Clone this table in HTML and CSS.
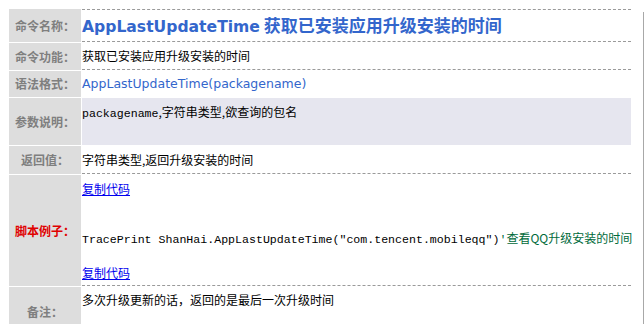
FILE: index.html
```html
<!DOCTYPE html>
<html>
<head>
<meta charset="utf-8">
<link rel="stylesheet" href="styles.css">
</head>
<body>
<table class="doc">
  <tr class="r-name">
    <th class="lbl">命令名称：</th>
    <td class="val title dash-top dash-bot"><span class="fn">AppLastUpdateTime</span> 获取已安装应用升级安装的时间</td>
  </tr>
  <tr class="r-func">
    <th class="lbl">命令功能：</th>
    <td class="val dash-bot">获取已安装应用升级安装的时间</td>
  </tr>
  <tr class="r-syntax">
    <th class="lbl">语法格式：</th>
    <td class="val syntax">AppLastUpdateTime(packagename)</td>
  </tr>
  <tr class="r-param">
    <th class="lbl">参数说明：</th>
    <td class="val param"><span class="mono">packagename</span>,字符串类型,欲查询的包名</td>
  </tr>
  <tr class="r-ret">
    <th class="lbl">返回值：</th>
    <td class="val dash-bot">字符串类型,返回升级安装的时间</td>
  </tr>
  <tr class="r-example">
    <th class="lbl red">脚本例子：</th>
    <td class="val example dash-bot">
      <div class="copy"><a href="#">复制代码</a></div>
      <div class="code"><span class="mono">TracePrint ShanHai.AppLastUpdateTime("com.tencent.mobileqq")</span><span class="comment"><span class="mono">'</span>查看QQ升级安装的时间</span></div>
      <div class="copy copy2"><a href="#">复制代码</a></div>
    </td>
  </tr>
  <tr class="r-note">
    <th class="lbl">备注：</th>
    <td class="val note">多次升级更新的话，返回的是最后一次升级时间</td>
  </tr>
</table>
<div class="edge"></div>
</body>
</html>
```

FILE: styles.css
```css
html, body {
  margin: 0;
  padding: 0;
  background: #ffffff;
  overflow: hidden;
}
body {
  padding: 8px 0 0 8px;
  font-family: "Noto Sans CJK SC", "Liberation Sans", sans-serif;
  font-size: 12px;
  color: #000;
}
.doc {
  width: 624px;
  border-collapse: separate;
  border-spacing: 1px;
  table-layout: fixed;
}
.lbl {
  width: 72px;
  padding: 0;
  background: #dddddd;
  color: #7f7f7f;
  font-weight: bold;
  font-size: 12px;
  text-align: center;
  vertical-align: middle;
  line-height: 14px;
}
.lbl.red {
  color: #e00000;
}
.val {
  padding: 0 0 0 0;
  vertical-align: middle;
  line-height: 14px;
  text-align: left;
}
.dash-top { border-top: 1px dashed #9a9a9a; }
.dash-bot { border-bottom: 1px dashed #9a9a9a; }

.r-name { height: 33px; }
.r-func { height: 27px; }
.r-syntax { height: 26px; }
.r-param { height: 47px; }
.r-ret { height: 28px; }
.r-example { height: 111px; }
.r-note { height: 50px; }

.title {
  color: #3366cc;
  font-size: 17px;
  font-weight: bold;
  line-height: 20px;
}
.title .fn {
  font-family: "DejaVu Sans", sans-serif;
  font-size: 15.6px;
}
.syntax {
  color: #3366cc;
  font-family: "DejaVu Sans", sans-serif;
  font-size: 12.5px;
}
.param {
  background: #e6e6ef;
  vertical-align: top;
  padding-top: 7px;
}
.mono {
  font-family: "Liberation Mono", monospace;
  font-size: 11.6px;
}
.example {
  vertical-align: top;
  padding-top: 6px;
}
.copy {
  line-height: 16px;
}
.copy a {
  color: #0000ee;
  text-decoration: underline;
}
.code {
  margin-top: 33px;
  line-height: 16px;
  white-space: nowrap;
}
.copy2 {
  margin-top: 17px;
}
.comment {
  color: #006a3a;
}
.note {
  vertical-align: top;
  padding-top: 6px;
}
.edge {
  position: fixed;
  left: 643px;
  top: 12px;
  width: 1px;
  bottom: 0;
  background: #a8a8a8;
}
```
